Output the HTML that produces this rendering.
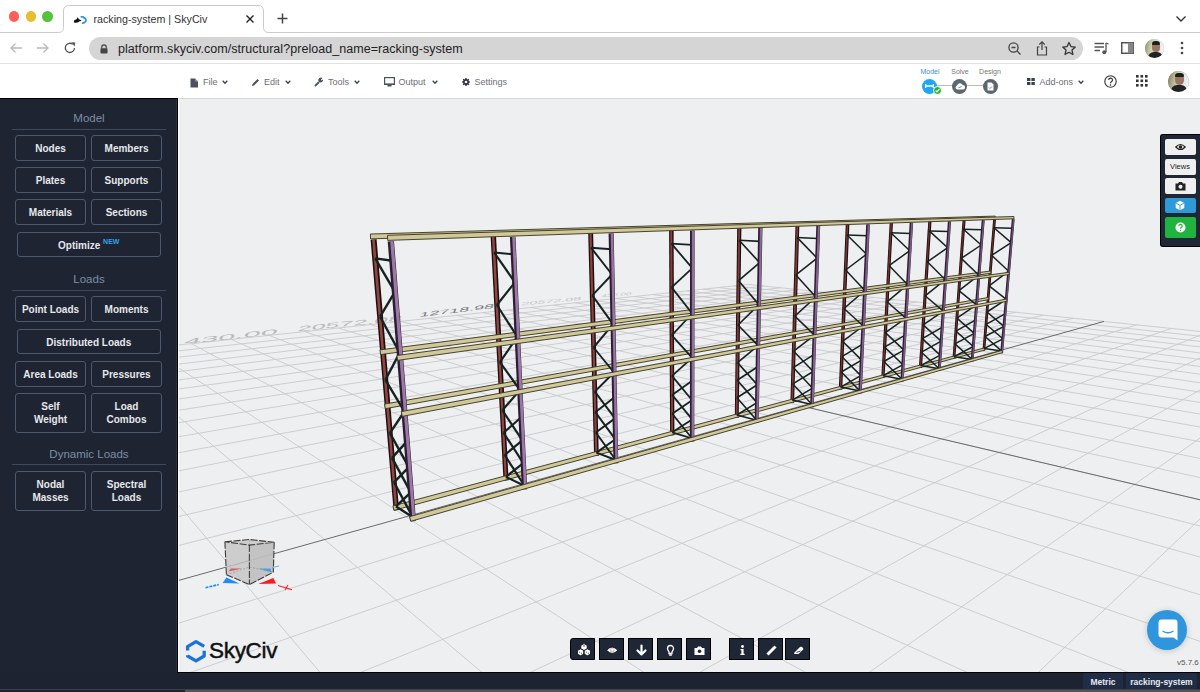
<!DOCTYPE html>
<html><head><meta charset="utf-8">
<style>
*{box-sizing:border-box;margin:0;padding:0}
html,body{width:1200px;height:692px;overflow:hidden;background:#fff;font-family:"Liberation Sans",sans-serif}
.abs{position:absolute}
#tabbar{position:absolute;left:0;top:0;width:1200px;height:33px;background:#fff}
.tl{position:absolute;top:11px;width:10.5px;height:10.5px;border-radius:50%}
#tab{position:absolute;left:63.5px;top:5px;width:200px;height:29px;background:#fff;border:1px solid #cfcfcf;border-bottom:none;border-radius:8px 8px 0 0}
#tabline1{position:absolute;left:0;top:32px;width:64px;height:1px;background:#cfcfcf}
#tabline2{position:absolute;left:263px;top:32px;width:937px;height:1px;background:#cfcfcf}
#addr{position:absolute;left:0;top:33px;width:1200px;height:31px;background:#fff;border-bottom:1px solid #e2e2e2}
#pill{position:absolute;left:89px;top:4px;width:994px;height:23px;border-radius:11.5px;background:#d5d5d5}
#url{position:absolute;left:118px;top:8.5px;font-size:12.5px;color:#222;letter-spacing:0.05px;white-space:nowrap}
#hdr{position:absolute;left:0;top:64px;width:1200px;height:34px;background:#fff}
.menu{position:absolute;top:12.5px;font-size:9px;color:#6b6f76;white-space:nowrap}
#side{position:absolute;left:0;top:98px;width:178px;height:574px;background:#1e2432;border-top:1px solid #000;border-right:1px solid #000;box-shadow:inset -1px 0 #2b3242}
.sh{position:absolute;left:0;width:178px;text-align:center;font-size:11.5px;color:#7d8da3}
.sl{position:absolute;left:12px;width:154px;height:1.5px;background:#3e4a5c}
.btn{position:absolute;height:25.5px;border:1px solid #4c586c;border-radius:3px;color:#e6e8ec;font-weight:bold;font-size:10px;text-align:center;line-height:26px;white-space:nowrap}
.btn2{line-height:13.5px;padding-top:5.5px}
#vp{position:absolute;left:178px;top:98px;width:1022px;height:574px;background:#eeeff1;overflow:hidden;border-top:1px solid #d6d8db;border-left:1px solid #fff}
#vp svg{position:absolute;left:0;top:0}
.g{stroke:#c9cacc;stroke-width:0.9}
.ax{stroke:#6a6a6a;stroke-width:1}
#status{position:absolute;left:0;top:672px;width:1200px;height:20px;background:#1d2331}
.tbb{position:absolute;top:538.8px;width:25px;height:22.5px;background:#1f2736;border:1px solid #000;line-height:0}
#rpanel{position:absolute;left:1159px;top:133px;width:41px;height:113px;background:#1f2736;border:1px solid #000;border-right:none;border-radius:3px 0 0 3px}
.rb{position:absolute;left:3.5px;width:31px;border-radius:2px;background:#efefef}
</style></head><body>
<div id="tabbar">
  <div class="tl" style="left:8.75px;background:#fe5f57"></div>
  <div class="tl" style="left:25.5px;background:#e5bf2e"></div>
  <div class="tl" style="left:42.25px;background:#57c23b"></div>
  <svg class="abs" style="left:0;top:0" width="1200" height="34">
    <path d="M0 32.5H58.5Q63.5 32.5 63.5 27.5V11Q63.5 5.5 69 5.5H258Q263.5 5.5 263.5 11V27.5Q263.5 32.5 268.5 32.5H1200" fill="none" stroke="#cbcbcb" stroke-width="1"/>
  </svg>
  <svg class="abs" style="left:72px;top:15px" width="17" height="10" viewBox="72 15 17 10">
    <path d="M74 22.6Q73.2 19.8 76.3 19.4L77.7 17.3L78.9 19.3Q80.6 19.6 81.6 21.1L79.6 21.2Q77.3 23.2 74 22.6Z" fill="#111"/>
    <path d="M81.3 16.9Q83.4 16.4 83.6 17.6Q86.8 18.8 85.8 21.2Q85 23 82.6 23.2" fill="none" stroke="#2b8fe8" stroke-width="1.7" stroke-linecap="round"/>
  </svg>
  <div class="abs" style="left:93.5px;top:13px;font-size:10.7px;color:#333;white-space:nowrap">racking-system | SkyCiv</div>
  <svg class="abs" style="left:245px;top:14px" width="10" height="10"><path d="M1.5 1.5L8.5 8.5M8.5 1.5L1.5 8.5" stroke="#222" stroke-width="1.4"/></svg>
  <svg class="abs" style="left:277px;top:13px" width="11" height="11"><path d="M5.5 0.5V10.5M0.5 5.5H10.5" stroke="#444" stroke-width="1.5"/></svg>
  <svg class="abs" style="left:1175px;top:15px" width="12" height="8"><path d="M1.5 1.5L6 6L10.5 1.5" stroke="#333" stroke-width="1.4" fill="none"/></svg>
</div>
<div id="addr">
  <svg class="abs" style="left:9px;top:9px" width="14" height="12"><path d="M13 6H2M6.5 1.5L2 6L6.5 10.5" stroke="#bbb" stroke-width="1.3" fill="none"/></svg>
  <svg class="abs" style="left:36px;top:9px" width="14" height="12"><path d="M1 6H12M7.5 1.5L12 6L7.5 10.5" stroke="#bbb" stroke-width="1.3" fill="none"/></svg>
  <svg class="abs" style="left:63px;top:8px" width="14" height="14"><path d="M11.5 7A4.6 4.6 0 1 1 9.8 3.3" stroke="#555" stroke-width="1.3" fill="none"/><path d="M8.3 1.2L12.3 1.6L11.6 5.4Z" fill="#555"/></svg>
  <div id="pill">
    <svg class="abs" style="left:11px;top:7px" width="8" height="10"><path d="M1.8 4.5V3A2.2 2.2 0 0 1 6.2 3V4.5" stroke="#444" stroke-width="1.2" fill="none"/><rect x="0.5" y="4.3" width="7" height="5.2" rx="0.8" fill="#444"/></svg>
    <svg class="abs" style="left:918px;top:4px" width="16" height="16"><circle cx="6.5" cy="6.5" r="4.6" stroke="#444" stroke-width="1.3" fill="none"/><path d="M4.5 6.5H8.5M10 10L13.5 13.5" stroke="#444" stroke-width="1.3"/></svg>
    <svg class="abs" style="left:946px;top:3px" width="14" height="17"><path d="M4.5 7H2.5V15H11.5V7H9.5" stroke="#444" stroke-width="1.2" fill="none"/><path d="M7 10V2M4.3 4.5L7 1.8L9.7 4.5" stroke="#444" stroke-width="1.2" fill="none"/></svg>
    <svg class="abs" style="left:972px;top:4px" width="16" height="15"><path d="M8 1.5L9.9 5.6L14.3 6.1L11 9.1L11.9 13.5L8 11.3L4.1 13.5L5 9.1L1.7 6.1L6.1 5.6Z" stroke="#333" stroke-width="1.3" fill="none" stroke-linejoin="round"/></svg>
  </div>
  <div id="url">platform.skyciv.com/structural?preload_name=racking-system</div>
  <svg class="abs" style="left:1094px;top:9px" width="15" height="13"><path d="M0.5 1.5H10M0.5 5H10M0.5 8.5H6" stroke="#555" stroke-width="1.3"/><path d="M12 1V10" stroke="#555" stroke-width="1.3"/><circle cx="10.3" cy="10.2" r="2" fill="#555"/><path d="M12 1L14.5 2" stroke="#555" stroke-width="1.3"/></svg>
  <svg class="abs" style="left:1121px;top:9px" width="13" height="12"><rect x="0.75" y="0.75" width="11.5" height="10.5" stroke="#555" stroke-width="1.5" fill="none"/><rect x="7" y="0.75" width="5.25" height="10.5" fill="#888"/></svg>
  <div class="abs" style="left:1145px;top:6px;width:19px;height:19px;border-radius:50%;overflow:hidden;background:#aab49a">
  <div class="abs" style="left:0;top:0;width:19px;height:19px;background:linear-gradient(100deg,#8a8a60 0,#c8c8a8 30%,#e6eaec 65%,#f4f6f8 100%)"></div>
  <div class="abs" style="left:6.5px;top:3px;width:8px;height:10px;border-radius:45%;background:#9a7660"></div>
  <div class="abs" style="left:6.5px;top:2px;width:8px;height:3.5px;border-radius:4px 4px 1px 1px;background:#1e1e1e"></div>
  <div class="abs" style="left:3px;top:13px;width:15px;height:9px;border-radius:6px 6px 0 0;background:#222"></div>
</div>
  <svg class="abs" style="left:1180px;top:8px" width="4" height="14"><circle cx="2" cy="2" r="1.3" fill="#444"/><circle cx="2" cy="7" r="1.3" fill="#444"/><circle cx="2" cy="12" r="1.3" fill="#444"/></svg>
</div>
<div id="hdr">
<svg class="abs" style="left:190px;top:14px" width="9" height="10"><path d="M0.5 0.5H5L8 3.5V9.5H0.5Z" fill="#4a5260"/><path d="M5 0.5V3.5H8" fill="#8a929e"/></svg>
<div class="menu" style="left:203px">File</div>
<svg class="abs" style="left:222px;top:16px" width="6" height="5"><path d="M0.7 0.8L3 3.2L5.3 0.8" stroke="#3a4250" stroke-width="1.3" fill="none"/></svg>
<svg class="abs" style="left:251px;top:14px" width="9" height="9"><path d="M1 8L1.5 6L6.5 1L8 2.5L3 7.5Z" fill="#4a5260"/></svg>
<div class="menu" style="left:264px">Edit</div>
<svg class="abs" style="left:285px;top:16px" width="6" height="5"><path d="M0.7 0.8L3 3.2L5.3 0.8" stroke="#3a4250" stroke-width="1.3" fill="none"/></svg>
<svg class="abs" style="left:314px;top:13px" width="9" height="10"><path d="M1 9L5 5" stroke="#4a5260" stroke-width="1.8"/><path d="M4.5 4A2.6 2.6 0 0 1 8.5 1L7 2.8L7.6 3.6L9 2.4A2.6 2.6 0 0 1 5.8 5.5Z" fill="#4a5260"/></svg>
<div class="menu" style="left:328px">Tools</div>
<svg class="abs" style="left:354px;top:16px" width="6" height="5"><path d="M0.7 0.8L3 3.2L5.3 0.8" stroke="#3a4250" stroke-width="1.3" fill="none"/></svg>
<svg class="abs" style="left:384px;top:13px" width="11" height="10"><rect x="0.6" y="0.6" width="9.8" height="6.8" stroke="#4a5260" stroke-width="1.2" fill="none"/><rect x="0" y="6.5" width="11" height="1.5" fill="#4a5260"/><rect x="3.5" y="8" width="4" height="1.5" fill="#4a5260"/></svg>
<div class="menu" style="left:398.5px">Output</div>
<svg class="abs" style="left:432px;top:16px" width="6" height="5"><path d="M0.7 0.8L3 3.2L5.3 0.8" stroke="#3a4250" stroke-width="1.3" fill="none"/></svg>
<svg class="abs" style="left:462px;top:14px" width="8" height="8" viewBox="0 0 16 16"><path d="M6.8 0h2.4l.4 2.2 1.4.6 1.8-1.3 1.7 1.7-1.3 1.8.6 1.4 2.2.4v2.4l-2.2.4-.6 1.4 1.3 1.8-1.7 1.7-1.8-1.3-1.4.6-.4 2.2H6.8l-.4-2.2-1.4-.6-1.8 1.3-1.7-1.7 1.3-1.8-.6-1.4L0 9.2V6.8l2.2-.4.6-1.4-1.3-1.8 1.7-1.7 1.8 1.3 1.4-.6z" fill="#2a3240"/><circle cx="8" cy="8" r="2.6" fill="#fff"/></svg>
<div class="menu" style="left:474.5px">Settings</div>

<div class="abs" style="left:915px;top:4px;width:30px;text-align:center;font-size:7px;color:#3a8fd9">Model</div>
<div class="abs" style="left:945px;top:4px;width:30px;text-align:center;font-size:7px;color:#777">Solve</div>
<div class="abs" style="left:975px;top:4px;width:30px;text-align:center;font-size:7px;color:#777">Design</div>
<div class="abs" style="left:936px;top:21px;width:48px;height:1px;background:#b8bcc2"></div>
<div class="abs" style="left:922px;top:14.5px;width:15px;height:15px;border-radius:50%;background:#1ea5f4"></div>
<svg class="abs" style="left:925px;top:19px" width="9" height="6"><path d="M0.5 1V5M8.5 1V5M0.5 3H8.5" stroke="#fff" stroke-width="1.6"/></svg>
<div class="abs" style="left:933.5px;top:86px"></div>
<div class="abs" style="left:932.5px;top:21.5px;width:9px;height:9px;border-radius:50%;background:#22b33a;border:1px solid #fff"></div>
<svg class="abs" style="left:934.5px;top:23.5px" width="5" height="5"><path d="M0.6 2.5L2 3.9L4.5 1" stroke="#fff" stroke-width="1.2" fill="none"/></svg>
<div class="abs" style="left:952px;top:14.5px;width:15px;height:15px;border-radius:50%;background:#5b6673"></div>
<svg class="abs" style="left:955px;top:18px" width="10" height="8"><path d="M2.3 7.5A2 2 0 0 1 2 3.6A3 3 0 0 1 7.6 3A2.2 2.2 0 0 1 8 7.5Z" fill="#fff"/><path d="M3.5 5L4.5 6L6.5 4" stroke="#5b6673" stroke-width="0.8" fill="none"/></svg>
<div class="abs" style="left:982.5px;top:14.5px;width:15px;height:15px;border-radius:50%;background:#5b6673"></div>
<svg class="abs" style="left:986.5px;top:17.5px" width="7" height="9"><path d="M0.5 0.5H4.5L6.5 2.5V8.5H0.5Z" fill="#fff"/><path d="M2 5.5L3 6.5L5 4.5" stroke="#5b6673" stroke-width="0.8" fill="none"/></svg>

<svg class="abs" style="left:1027px;top:14px" width="8" height="7"><rect x="0" y="0" width="3.4" height="3" fill="#3a4250"/><rect x="4.4" y="0" width="3.4" height="3" fill="#3a4250"/><rect x="0" y="4" width="3.4" height="3" fill="#3a4250"/><rect x="4.4" y="4" width="3.4" height="3" fill="#3a4250"/></svg>
<div class="menu" style="left:1039.5px">Add-ons</div>
<svg class="abs" style="left:1078px;top:16px" width="6" height="5"><path d="M0.7 0.8L3 3.2L5.3 0.8" stroke="#3a4250" stroke-width="1.3" fill="none"/></svg>
<svg class="abs" style="left:1104px;top:11px" width="13" height="13"><circle cx="6.5" cy="6.5" r="5.7" stroke="#333" stroke-width="1.1" fill="none"/><path d="M4.7 5A1.9 1.9 0 1 1 7.4 6.7Q6.5 7.2 6.5 8.2" stroke="#333" stroke-width="1.2" fill="none"/><circle cx="6.5" cy="10" r="0.8" fill="#333"/></svg>
<svg class="abs" style="left:1136px;top:11px" width="12" height="12"><g fill="#333"><rect x="0" y="0" width="2.6" height="2.6"/><rect x="4.5" y="0" width="2.6" height="2.6"/><rect x="9" y="0" width="2.6" height="2.6"/><rect x="0" y="4.5" width="2.6" height="2.6"/><rect x="4.5" y="4.5" width="2.6" height="2.6"/><rect x="9" y="4.5" width="2.6" height="2.6"/><rect x="0" y="9" width="2.6" height="2.6"/><rect x="4.5" y="9" width="2.6" height="2.6"/><rect x="9" y="9" width="2.6" height="2.6"/></g></svg>
<div class="abs" style="left:1168px;top:7px;width:21px;height:21px;border-radius:50%;overflow:hidden;background:#7a8a6a">
  <div class="abs" style="left:0;top:0;width:21px;height:21px;background:linear-gradient(100deg,#7a7a58 0,#b8b898 30%,#e0e4e6 65%,#f2f4f6 100%)"></div>
  <div class="abs" style="left:7px;top:3px;width:9px;height:11px;border-radius:45%;background:#9a7660"></div>
  <div class="abs" style="left:7px;top:2px;width:9px;height:4px;border-radius:4px 4px 1px 1px;background:#1e1e1e"></div>
  <div class="abs" style="left:3px;top:14px;width:16px;height:10px;border-radius:6px 6px 0 0;background:#222"></div>
</div>

</div>
<div id="side">
<div class="sh" style="top:13px">Model</div>
<div class="sl" style="top:29.5px"></div>
<div class="btn" style="left:15px;top:36px;width:71px">Nodes</div>
<div class="btn" style="left:91px;top:36px;width:71px">Members</div>
<div class="btn" style="left:15px;top:68px;width:71px">Plates</div>
<div class="btn" style="left:91px;top:68px;width:71px">Supports</div>
<div class="btn" style="left:15px;top:100px;width:71px">Materials</div>
<div class="btn" style="left:91px;top:100px;width:71px">Sections</div>
<div class="btn" style="left:16.5px;top:132.5px;width:144.5px">Optimize <sup style="font-size:7px;color:#2fa4e7;vertical-align:5px;line-height:0">NEW</sup></div>
<div class="sh" style="top:174px">Loads</div>
<div class="sl" style="top:190.5px"></div>
<div class="btn" style="left:15px;top:197px;width:71px">Point Loads</div>
<div class="btn" style="left:91px;top:197px;width:71px">Moments</div>
<div class="btn" style="left:16.5px;top:229.5px;width:144.5px">Distributed Loads</div>
<div class="btn" style="left:15px;top:262px;width:71px">Area Loads</div>
<div class="btn" style="left:91px;top:262px;width:71px">Pressures</div>
<div class="btn btn2" style="left:15px;top:294px;width:71px;height:39.5px">Self<br>Weight</div>
<div class="btn btn2" style="left:91px;top:294px;width:71px;height:39.5px">Load<br>Combos</div>
<div class="sh" style="top:349px">Dynamic Loads</div>
<div class="sl" style="top:364.5px"></div>
<div class="btn btn2" style="left:15px;top:372px;width:71px;height:39.5px">Nodal<br>Masses</div>
<div class="btn btn2" style="left:91px;top:372px;width:71px;height:39.5px">Spectral<br>Loads</div>

</div>
<div id="vp">
<svg width="1022" height="574" viewBox="0 0 1022 574">
<line class="g" x1="-7676.2" y1="6209.3" x2="-502.4" y2="299.4"/>
<line class="g" x1="-5577.2" y1="6212.6" x2="-426.6" y2="291.3"/>
<line class="g" x1="-3478.2" y1="6215.9" x2="-356.6" y2="283.9"/>
<line class="g" x1="-1379.1" y1="6219.2" x2="-292.0" y2="277.0"/>
<line class="g" x1="719.9" y1="6222.5" x2="-232.1" y2="270.6"/>
<line class="g" x1="2818.9" y1="6225.7" x2="-176.4" y2="264.7"/>
<line class="g" x1="4917.9" y1="6229.0" x2="-124.4" y2="259.2"/>
<line class="g" x1="7016.9" y1="6232.3" x2="-75.9" y2="254.0"/>
<line class="g" x1="9115.9" y1="6235.6" x2="-30.4" y2="249.2"/>
<line class="g" x1="11214.9" y1="6238.9" x2="12.2" y2="244.6"/>
<line class="g" x1="13313.9" y1="6242.2" x2="52.4" y2="240.4"/>
<line class="g" x1="10183.6" y1="4194.7" x2="90.2" y2="236.4"/>
<line class="g" x1="6087.6" y1="2295.5" x2="125.8" y2="232.6"/>
<line class="g" x1="4588.0" y1="1600.2" x2="159.5" y2="229.0"/>
<line class="g" x1="3810.2" y1="1239.6" x2="191.4" y2="225.6"/>
<line class="g" x1="3334.1" y1="1018.9" x2="221.7" y2="222.4"/>
<line class="g" x1="3012.8" y1="869.9" x2="250.4" y2="219.3"/>
<line class="g" x1="2781.2" y1="762.5" x2="277.7" y2="216.4"/>
<line class="g" x1="2606.5" y1="681.5" x2="303.7" y2="213.7"/>
<line class="g" x1="2469.9" y1="618.2" x2="328.4" y2="211.0"/>
<line class="g" x1="2360.2" y1="567.3" x2="352.1" y2="208.5"/>
<line class="g" x1="2270.2" y1="525.6" x2="374.6" y2="206.1"/>
<line class="g" x1="2195.0" y1="490.7" x2="396.2" y2="203.8"/>
<line class="g" x1="2131.3" y1="461.2" x2="416.8" y2="201.6"/>
<line class="g" x1="2076.5" y1="435.8" x2="436.6" y2="199.5"/>
<line class="g" x1="2029.0" y1="413.7" x2="455.6" y2="197.5"/>
<line class="g" x1="1987.3" y1="394.4" x2="473.8" y2="195.6"/>
<line class="g" x1="1950.5" y1="377.4" x2="491.2" y2="193.7"/>
<line class="g" x1="1917.8" y1="362.2" x2="508.0" y2="191.9"/>
<line class="g" x1="1888.5" y1="348.6" x2="524.2" y2="190.2"/>
<line class="g" x1="1862.0" y1="336.3" x2="539.7" y2="188.6"/>
<line class="g" x1="1838.1" y1="325.2" x2="554.7" y2="187.0"/>
<line class="g" x1="1816.4" y1="315.2" x2="569.2" y2="185.4"/>
<line class="g" x1="14603.9" y1="6244.2" x2="1816.4" y2="315.2"/>
<line class="g" x1="12416.7" y1="6240.8" x2="1723.1" y2="305.5"/>
<line class="g" x1="10229.4" y1="6237.3" x2="1637.9" y2="296.6"/>
<line class="g" x1="8042.1" y1="6233.9" x2="1559.7" y2="288.5"/>
<line class="g" x1="5854.8" y1="6230.5" x2="1487.7" y2="281.0"/>
<line class="g" x1="3667.5" y1="6227.1" x2="1421.1" y2="274.0"/>
<line class="g" x1="1480.2" y1="6223.7" x2="1359.5" y2="267.6"/>
<line class="g" x1="-707.0" y1="6220.2" x2="1302.2" y2="261.7"/>
<line class="g" x1="-2894.3" y1="6216.8" x2="1248.8" y2="256.1"/>
<line class="g" x1="-5081.6" y1="6213.4" x2="1199.0" y2="250.9"/>
<line class="g" x1="-7268.9" y1="6210.0" x2="1152.3" y2="246.1"/>
<line class="g" x1="-3788.3" y1="3006.4" x2="1108.6" y2="241.5"/>
<line class="g" x1="-2405.8" y1="1867.4" x2="1067.4" y2="237.3"/>
<line class="g" x1="-1801.6" y1="1369.7" x2="1028.7" y2="233.2"/>
<line class="g" x1="-1462.9" y1="1090.6" x2="992.2" y2="229.4"/>
<line class="g" x1="-1246.1" y1="912.1" x2="957.7" y2="225.8"/>
<line class="g" x1="-984.9" y1="696.8" x2="894.0" y2="219.2"/>
<line class="g" x1="-900.0" y1="626.9" x2="864.6" y2="216.2"/>
<line class="g" x1="-833.0" y1="571.7" x2="836.7" y2="213.3"/>
<line class="g" x1="-778.6" y1="526.9" x2="810.2" y2="210.5"/>
<line class="g" x1="-733.7" y1="489.9" x2="784.8" y2="207.9"/>
<line class="g" x1="-695.9" y1="458.8" x2="760.7" y2="205.4"/>
<line class="g" x1="-663.7" y1="432.3" x2="737.7" y2="203.0"/>
<line class="g" x1="-635.9" y1="409.4" x2="715.6" y2="200.7"/>
<line class="g" x1="-611.7" y1="389.4" x2="694.5" y2="198.5"/>
<line class="g" x1="-590.5" y1="371.9" x2="674.4" y2="196.4"/>
<line class="g" x1="-571.6" y1="356.4" x2="655.0" y2="194.4"/>
<line class="g" x1="-554.8" y1="342.5" x2="636.4" y2="192.4"/>
<line class="g" x1="-539.7" y1="330.1" x2="618.6" y2="190.6"/>
<line class="g" x1="-526.0" y1="318.8" x2="601.5" y2="188.8"/>
<line class="g" x1="-513.7" y1="308.6" x2="585.0" y2="187.1"/>
<line class="g" x1="-502.4" y1="299.4" x2="569.2" y2="185.4"/>
<line class="ax" x1="3012.8" y1="869.9" x2="622.8" y2="307.0"/>
<line class="ax" x1="-1095.6" y1="788.0" x2="925.0" y2="222.4"/>
<text transform="translate(4.4,245.5) rotate(-6.40) skewX(-25) scale(1,0.236)" font-family="Liberation Sans" font-size="30.8" fill="#b9babc">430.00</text>
<text transform="translate(118.0,232.5) rotate(-6.00) skewX(-25) scale(1,0.277)" font-family="Liberation Sans" font-size="25.2" fill="#b9babc">20572.08</text>
<text transform="translate(240.0,218.0) rotate(-6.90) skewX(-25) scale(1,0.326)" font-family="Liberation Sans" font-size="18.0" fill="#7a7a7a">12718.98</text>
<text transform="translate(342.0,206.5) rotate(-5.24) skewX(-25) scale(1,0.309)" font-family="Liberation Sans" font-size="14.4" fill="#c4c5c7">20572.08</text>
<text transform="translate(422.0,198.5) rotate(-4.76) skewX(-25) scale(1,0.426)" font-family="Liberation Sans" font-size="9.8" fill="#c4c5c7">430.00</text>
<polygon points="806.2,251.6 817.0,119.9 814.2,119.7 803.5,251.4" fill="#220c0c"/><polygon points="805.4,251.6 816.2,119.9 814.9,119.7 804.2,251.5" fill="#5b2d2c"/>
<polygon points="776.3,259.8 786.6,120.9 783.6,120.7 773.5,259.6" fill="#220c0c"/><polygon points="775.5,259.7 785.7,120.9 784.3,120.8 774.2,259.6" fill="#60302f"/>
<polygon points="743.0,268.9 752.5,122.1 749.3,121.9 739.9,268.7" fill="#220c0c"/><polygon points="742.1,268.8 751.5,122.0 750.1,121.9 740.7,268.7" fill="#663332"/>
<polygon points="705.5,279.0 714.0,123.3 710.7,123.2 702.3,278.9" fill="#220c0c"/><polygon points="704.6,279.0 713.0,123.3 711.5,123.2 703.1,278.9" fill="#6b3635"/>
<polygon points="663.2,290.6 670.4,124.8 666.8,124.6 659.8,290.4" fill="#220c0c"/><polygon points="662.2,290.5 669.3,124.7 667.7,124.7 660.7,290.4" fill="#703938"/>
<polygon points="615.1,303.7 620.3,126.4 616.5,126.3 611.4,303.5" fill="#220c0c"/><polygon points="614.0,303.6 619.2,126.4 617.4,126.4 612.3,303.6" fill="#753c3a"/>
<polygon points="559.7,318.7 562.4,128.4 558.2,128.3 555.8,318.7" fill="#220c0c"/><polygon points="558.5,318.7 561.1,128.3 559.3,128.3 556.7,318.7" fill="#7a3f3d"/>
<polygon points="495.4,336.2 494.6,130.6 490.1,130.6 491.1,336.2" fill="#220c0c"/><polygon points="494.1,336.2 493.2,130.6 491.2,130.6 492.2,336.2" fill="#804240"/>
<polygon points="419.8,356.7 414.1,133.2 409.2,133.4 415.1,356.9" fill="#220c0c"/><polygon points="418.4,356.8 412.6,133.3 410.4,133.3 416.3,356.8" fill="#854543"/>
<polygon points="329.6,381.2 317.0,136.4 311.6,136.7 324.5,381.5" fill="#220c0c"/><polygon points="328.0,381.3 315.4,136.5 312.9,136.6 325.8,381.4" fill="#8a4846"/>
<polygon points="220.1,410.9 197.6,140.3 191.6,140.8 214.6,411.4" fill="#220c0c"/><polygon points="218.5,411.1 195.8,140.4 193.1,140.7 216.0,411.3" fill="#8a4846"/>
<polygon points="215.1,411.3 805.9,251.0 805.3,248.9 213.9,406.9" fill="#d0c898" stroke="#3e3b28" stroke-width="0.95"/>
<polygon points="206.3,309.7 809.9,200.6 809.5,198.4 205.5,305.1" fill="#d0c898" stroke="#3e3b28" stroke-width="0.95"/>
<polygon points="201.6,255.6 812.0,174.3 811.7,172.0 201.0,250.9" fill="#d0c898" stroke="#3e3b28" stroke-width="0.95"/>
<polygon points="191.5,139.9 816.4,119.4 816.3,117.1 191.4,135.0" fill="#d0c898" stroke="#3e3b28" stroke-width="0.95"/>
<line x1="805.0" y1="249.6" x2="822.8" y2="252.1" stroke="#152222" stroke-width="1.50"/>
<line x1="806.0" y1="237.5" x2="822.8" y2="252.1" stroke="#152222" stroke-width="1.50"/>
<line x1="823.9" y1="239.8" x2="805.0" y2="249.6" stroke="#152222" stroke-width="1.50"/>
<line x1="807.0" y1="225.3" x2="823.9" y2="239.8" stroke="#152222" stroke-width="1.50"/>
<line x1="824.9" y1="227.4" x2="806.0" y2="237.5" stroke="#152222" stroke-width="1.50"/>
<line x1="808.0" y1="213.0" x2="824.9" y2="227.4" stroke="#152222" stroke-width="1.50"/>
<line x1="826.0" y1="214.9" x2="807.0" y2="225.3" stroke="#152222" stroke-width="1.50"/>
<line x1="827.3" y1="200.3" x2="808.0" y2="213.0" stroke="#152222" stroke-width="1.50"/>
<line x1="810.1" y1="186.8" x2="827.3" y2="200.3" stroke="#152222" stroke-width="1.50"/>
<line x1="829.7" y1="172.2" x2="810.1" y2="186.8" stroke="#152222" stroke-width="1.50"/>
<line x1="812.6" y1="156.3" x2="829.7" y2="172.2" stroke="#152222" stroke-width="1.50"/>
<line x1="832.2" y1="143.6" x2="812.6" y2="156.3" stroke="#152222" stroke-width="1.50"/>
<line x1="814.9" y1="128.7" x2="832.2" y2="143.6" stroke="#152222" stroke-width="1.50"/>
<line x1="814.9" y1="128.7" x2="833.4" y2="129.2" stroke="#152222" stroke-width="1.50"/>
<line x1="775.0" y1="257.7" x2="793.3" y2="260.5" stroke="#152222" stroke-width="1.50"/>
<line x1="776.0" y1="244.9" x2="793.3" y2="260.5" stroke="#152222" stroke-width="1.50"/>
<line x1="794.3" y1="247.5" x2="775.0" y2="257.7" stroke="#152222" stroke-width="1.50"/>
<line x1="776.9" y1="232.1" x2="794.3" y2="247.5" stroke="#152222" stroke-width="1.50"/>
<line x1="795.3" y1="234.4" x2="776.0" y2="244.9" stroke="#152222" stroke-width="1.50"/>
<line x1="777.9" y1="219.1" x2="795.3" y2="234.4" stroke="#152222" stroke-width="1.50"/>
<line x1="796.3" y1="221.2" x2="776.9" y2="232.1" stroke="#152222" stroke-width="1.50"/>
<line x1="797.5" y1="205.9" x2="777.9" y2="219.1" stroke="#152222" stroke-width="1.50"/>
<line x1="779.9" y1="191.6" x2="797.5" y2="205.9" stroke="#152222" stroke-width="1.50"/>
<line x1="799.9" y1="176.2" x2="779.9" y2="191.6" stroke="#152222" stroke-width="1.50"/>
<line x1="782.2" y1="159.4" x2="799.9" y2="176.2" stroke="#152222" stroke-width="1.50"/>
<line x1="802.2" y1="146.0" x2="782.2" y2="159.4" stroke="#152222" stroke-width="1.50"/>
<line x1="784.4" y1="130.2" x2="802.2" y2="146.0" stroke="#152222" stroke-width="1.50"/>
<line x1="784.4" y1="130.2" x2="803.4" y2="130.7" stroke="#152222" stroke-width="1.50"/>
<line x1="741.6" y1="266.6" x2="760.2" y2="269.8" stroke="#152222" stroke-width="1.50"/>
<line x1="742.5" y1="253.2" x2="760.2" y2="269.8" stroke="#152222" stroke-width="1.50"/>
<line x1="761.2" y1="256.1" x2="741.6" y2="266.6" stroke="#152222" stroke-width="1.50"/>
<line x1="743.3" y1="239.6" x2="761.2" y2="256.1" stroke="#152222" stroke-width="1.50"/>
<line x1="762.2" y1="242.2" x2="742.5" y2="253.2" stroke="#152222" stroke-width="1.50"/>
<line x1="744.2" y1="225.9" x2="762.2" y2="242.2" stroke="#152222" stroke-width="1.50"/>
<line x1="763.1" y1="228.3" x2="743.3" y2="239.6" stroke="#152222" stroke-width="1.50"/>
<line x1="764.3" y1="212.1" x2="744.2" y2="225.9" stroke="#152222" stroke-width="1.50"/>
<line x1="746.1" y1="196.8" x2="764.3" y2="212.1" stroke="#152222" stroke-width="1.50"/>
<line x1="766.4" y1="180.7" x2="746.1" y2="196.8" stroke="#152222" stroke-width="1.50"/>
<line x1="748.3" y1="162.8" x2="766.4" y2="180.7" stroke="#152222" stroke-width="1.50"/>
<line x1="768.7" y1="148.7" x2="748.3" y2="162.8" stroke="#152222" stroke-width="1.50"/>
<line x1="750.2" y1="131.9" x2="768.7" y2="148.7" stroke="#152222" stroke-width="1.50"/>
<line x1="750.2" y1="131.9" x2="769.8" y2="132.5" stroke="#152222" stroke-width="1.50"/>
<line x1="704.1" y1="276.7" x2="723.1" y2="280.2" stroke="#152222" stroke-width="1.50"/>
<line x1="724.0" y1="265.7" x2="704.1" y2="276.7" stroke="#152222" stroke-width="1.50"/>
<line x1="704.8" y1="262.5" x2="723.1" y2="280.2" stroke="#152222" stroke-width="1.50"/>
<line x1="705.6" y1="248.1" x2="724.0" y2="265.7" stroke="#152222" stroke-width="1.50"/>
<line x1="724.9" y1="251.1" x2="704.8" y2="262.5" stroke="#152222" stroke-width="1.50"/>
<line x1="706.4" y1="233.6" x2="724.9" y2="251.1" stroke="#152222" stroke-width="1.50"/>
<line x1="725.7" y1="236.3" x2="705.6" y2="248.1" stroke="#152222" stroke-width="1.50"/>
<line x1="726.8" y1="219.1" x2="706.4" y2="233.6" stroke="#152222" stroke-width="1.50"/>
<line x1="708.0" y1="202.8" x2="726.8" y2="219.1" stroke="#152222" stroke-width="1.50"/>
<line x1="728.7" y1="185.7" x2="708.0" y2="202.8" stroke="#152222" stroke-width="1.50"/>
<line x1="710.0" y1="166.6" x2="728.7" y2="185.7" stroke="#152222" stroke-width="1.50"/>
<line x1="730.8" y1="151.7" x2="710.0" y2="166.6" stroke="#152222" stroke-width="1.50"/>
<line x1="711.8" y1="133.8" x2="730.8" y2="151.7" stroke="#152222" stroke-width="1.50"/>
<line x1="711.8" y1="133.8" x2="731.8" y2="134.5" stroke="#152222" stroke-width="1.50"/>
<line x1="661.6" y1="288.1" x2="681.1" y2="292.1" stroke="#152222" stroke-width="1.50"/>
<line x1="662.3" y1="273.0" x2="681.1" y2="292.1" stroke="#152222" stroke-width="1.50"/>
<line x1="681.8" y1="276.6" x2="661.6" y2="288.1" stroke="#152222" stroke-width="1.50"/>
<line x1="662.9" y1="257.7" x2="681.8" y2="276.6" stroke="#152222" stroke-width="1.50"/>
<line x1="682.6" y1="261.1" x2="662.3" y2="273.0" stroke="#152222" stroke-width="1.50"/>
<line x1="663.6" y1="242.3" x2="682.6" y2="261.1" stroke="#152222" stroke-width="1.50"/>
<line x1="683.3" y1="245.4" x2="662.9" y2="257.7" stroke="#152222" stroke-width="1.50"/>
<line x1="684.2" y1="227.0" x2="663.6" y2="242.3" stroke="#152222" stroke-width="1.50"/>
<line x1="665.0" y1="209.5" x2="684.2" y2="227.0" stroke="#152222" stroke-width="1.50"/>
<line x1="685.9" y1="191.4" x2="665.0" y2="209.5" stroke="#152222" stroke-width="1.50"/>
<line x1="666.6" y1="171.0" x2="685.9" y2="191.4" stroke="#152222" stroke-width="1.50"/>
<line x1="687.6" y1="155.2" x2="666.6" y2="171.0" stroke="#152222" stroke-width="1.50"/>
<line x1="668.1" y1="136.0" x2="687.6" y2="155.2" stroke="#152222" stroke-width="1.50"/>
<line x1="668.1" y1="136.0" x2="688.5" y2="136.8" stroke="#152222" stroke-width="1.50"/>
<line x1="613.3" y1="301.1" x2="633.1" y2="305.6" stroke="#152222" stroke-width="1.53"/>
<line x1="613.8" y1="284.9" x2="633.1" y2="305.6" stroke="#152222" stroke-width="1.53"/>
<line x1="633.6" y1="289.2" x2="613.3" y2="301.1" stroke="#152222" stroke-width="1.53"/>
<line x1="614.3" y1="268.6" x2="633.6" y2="289.2" stroke="#152222" stroke-width="1.53"/>
<line x1="634.2" y1="272.5" x2="613.8" y2="284.9" stroke="#152222" stroke-width="1.53"/>
<line x1="634.8" y1="255.7" x2="614.3" y2="268.6" stroke="#152222" stroke-width="1.53"/>
<line x1="614.7" y1="252.2" x2="634.2" y2="272.5" stroke="#152222" stroke-width="1.53"/>
<line x1="635.5" y1="236.1" x2="614.7" y2="252.2" stroke="#152222" stroke-width="1.53"/>
<line x1="615.8" y1="217.1" x2="635.5" y2="236.1" stroke="#152222" stroke-width="1.53"/>
<line x1="636.8" y1="198.0" x2="615.8" y2="217.1" stroke="#152222" stroke-width="1.53"/>
<line x1="616.9" y1="175.9" x2="636.8" y2="198.0" stroke="#152222" stroke-width="1.53"/>
<line x1="638.1" y1="159.1" x2="616.9" y2="175.9" stroke="#152222" stroke-width="1.53"/>
<line x1="618.0" y1="138.4" x2="638.1" y2="159.1" stroke="#152222" stroke-width="1.53"/>
<line x1="618.0" y1="138.4" x2="638.8" y2="139.4" stroke="#152222" stroke-width="1.53"/>
<line x1="557.8" y1="316.0" x2="577.7" y2="321.2" stroke="#152222" stroke-width="1.65"/>
<line x1="558.0" y1="298.7" x2="577.7" y2="321.2" stroke="#152222" stroke-width="1.65"/>
<line x1="578.0" y1="303.6" x2="557.8" y2="316.0" stroke="#152222" stroke-width="1.65"/>
<line x1="558.2" y1="281.2" x2="578.0" y2="303.6" stroke="#152222" stroke-width="1.65"/>
<line x1="578.3" y1="285.7" x2="558.0" y2="298.7" stroke="#152222" stroke-width="1.65"/>
<line x1="558.5" y1="263.6" x2="578.3" y2="285.7" stroke="#152222" stroke-width="1.65"/>
<line x1="578.7" y1="267.7" x2="558.2" y2="281.2" stroke="#152222" stroke-width="1.65"/>
<line x1="579.1" y1="246.6" x2="558.5" y2="263.6" stroke="#152222" stroke-width="1.65"/>
<line x1="559.0" y1="226.0" x2="579.1" y2="246.6" stroke="#152222" stroke-width="1.65"/>
<line x1="579.9" y1="205.6" x2="559.0" y2="226.0" stroke="#152222" stroke-width="1.65"/>
<line x1="559.6" y1="181.7" x2="579.9" y2="205.6" stroke="#152222" stroke-width="1.65"/>
<line x1="580.7" y1="163.7" x2="559.6" y2="181.7" stroke="#152222" stroke-width="1.65"/>
<line x1="560.1" y1="141.3" x2="580.7" y2="163.7" stroke="#152222" stroke-width="1.65"/>
<line x1="560.1" y1="141.3" x2="581.1" y2="142.4" stroke="#152222" stroke-width="1.65"/>
<line x1="493.2" y1="333.3" x2="513.1" y2="339.5" stroke="#152222" stroke-width="1.79"/>
<line x1="493.2" y1="314.7" x2="513.1" y2="339.5" stroke="#152222" stroke-width="1.79"/>
<line x1="513.1" y1="320.4" x2="493.2" y2="333.3" stroke="#152222" stroke-width="1.79"/>
<line x1="513.1" y1="301.2" x2="493.2" y2="314.7" stroke="#152222" stroke-width="1.79"/>
<line x1="493.1" y1="295.9" x2="513.1" y2="320.4" stroke="#152222" stroke-width="1.79"/>
<line x1="493.0" y1="276.9" x2="513.1" y2="301.2" stroke="#152222" stroke-width="1.79"/>
<line x1="513.2" y1="281.7" x2="493.1" y2="295.9" stroke="#152222" stroke-width="1.79"/>
<line x1="513.2" y1="258.9" x2="493.0" y2="276.9" stroke="#152222" stroke-width="1.79"/>
<line x1="492.8" y1="236.3" x2="513.2" y2="258.9" stroke="#152222" stroke-width="1.79"/>
<line x1="513.2" y1="214.5" x2="492.8" y2="236.3" stroke="#152222" stroke-width="1.79"/>
<line x1="492.6" y1="188.4" x2="513.2" y2="214.5" stroke="#152222" stroke-width="1.79"/>
<line x1="513.3" y1="169.1" x2="492.6" y2="188.4" stroke="#152222" stroke-width="1.79"/>
<line x1="492.4" y1="144.7" x2="513.3" y2="169.1" stroke="#152222" stroke-width="1.79"/>
<line x1="492.4" y1="144.7" x2="513.3" y2="145.9" stroke="#152222" stroke-width="1.79"/>
<line x1="417.4" y1="353.6" x2="436.8" y2="361.0" stroke="#152222" stroke-width="1.96"/>
<line x1="416.8" y1="333.5" x2="436.8" y2="361.0" stroke="#152222" stroke-width="1.96"/>
<line x1="436.4" y1="340.3" x2="417.4" y2="353.6" stroke="#152222" stroke-width="1.96"/>
<line x1="416.3" y1="313.2" x2="436.4" y2="340.3" stroke="#152222" stroke-width="1.96"/>
<line x1="436.0" y1="319.4" x2="416.8" y2="333.5" stroke="#152222" stroke-width="1.96"/>
<line x1="435.5" y1="298.3" x2="416.3" y2="313.2" stroke="#152222" stroke-width="1.96"/>
<line x1="415.8" y1="292.6" x2="436.0" y2="319.4" stroke="#152222" stroke-width="1.96"/>
<line x1="435.0" y1="273.5" x2="415.8" y2="292.6" stroke="#152222" stroke-width="1.96"/>
<line x1="414.6" y1="248.5" x2="435.0" y2="273.5" stroke="#152222" stroke-width="1.96"/>
<line x1="434.0" y1="225.1" x2="414.6" y2="248.5" stroke="#152222" stroke-width="1.96"/>
<line x1="413.3" y1="196.4" x2="434.0" y2="225.1" stroke="#152222" stroke-width="1.96"/>
<line x1="433.0" y1="175.5" x2="413.3" y2="196.4" stroke="#152222" stroke-width="1.96"/>
<line x1="412.0" y1="148.7" x2="433.0" y2="175.5" stroke="#152222" stroke-width="1.96"/>
<line x1="412.0" y1="148.7" x2="432.5" y2="150.2" stroke="#152222" stroke-width="1.96"/>
<line x1="326.9" y1="377.9" x2="345.4" y2="386.7" stroke="#152222" stroke-width="2.16"/>
<line x1="325.7" y1="356.0" x2="345.4" y2="386.7" stroke="#152222" stroke-width="2.16"/>
<line x1="344.3" y1="364.2" x2="326.9" y2="377.9" stroke="#152222" stroke-width="2.16"/>
<line x1="324.6" y1="333.8" x2="344.3" y2="364.2" stroke="#152222" stroke-width="2.16"/>
<line x1="343.3" y1="341.3" x2="325.7" y2="356.0" stroke="#152222" stroke-width="2.16"/>
<line x1="323.4" y1="311.3" x2="343.3" y2="341.3" stroke="#152222" stroke-width="2.16"/>
<line x1="342.2" y1="318.2" x2="324.6" y2="333.8" stroke="#152222" stroke-width="2.16"/>
<line x1="340.9" y1="291.0" x2="323.4" y2="311.3" stroke="#152222" stroke-width="2.16"/>
<line x1="320.9" y1="263.1" x2="340.9" y2="291.0" stroke="#152222" stroke-width="2.16"/>
<line x1="338.4" y1="237.9" x2="320.9" y2="263.1" stroke="#152222" stroke-width="2.16"/>
<line x1="317.9" y1="206.0" x2="338.4" y2="237.9" stroke="#152222" stroke-width="2.16"/>
<line x1="335.9" y1="183.3" x2="317.9" y2="206.0" stroke="#152222" stroke-width="2.16"/>
<line x1="315.2" y1="153.5" x2="335.9" y2="183.3" stroke="#152222" stroke-width="2.16"/>
<line x1="315.2" y1="153.5" x2="334.6" y2="155.3" stroke="#152222" stroke-width="2.16"/>
<line x1="217.0" y1="407.4" x2="233.8" y2="418.2" stroke="#152222" stroke-width="2.40"/>
<line x1="231.8" y1="393.4" x2="217.0" y2="407.4" stroke="#152222" stroke-width="2.40"/>
<line x1="215.0" y1="383.3" x2="233.8" y2="418.2" stroke="#152222" stroke-width="2.40"/>
<line x1="213.0" y1="358.9" x2="231.8" y2="393.4" stroke="#152222" stroke-width="2.40"/>
<line x1="229.8" y1="368.2" x2="215.0" y2="383.3" stroke="#152222" stroke-width="2.40"/>
<line x1="210.9" y1="334.2" x2="229.8" y2="368.2" stroke="#152222" stroke-width="2.40"/>
<line x1="227.8" y1="342.6" x2="213.0" y2="358.9" stroke="#152222" stroke-width="2.40"/>
<line x1="225.4" y1="312.5" x2="210.9" y2="334.2" stroke="#152222" stroke-width="2.40"/>
<line x1="206.4" y1="280.9" x2="225.4" y2="312.5" stroke="#152222" stroke-width="2.40"/>
<line x1="220.7" y1="253.7" x2="206.4" y2="280.9" stroke="#152222" stroke-width="2.40"/>
<line x1="201.1" y1="217.7" x2="220.7" y2="253.7" stroke="#152222" stroke-width="2.40"/>
<line x1="215.9" y1="192.9" x2="201.1" y2="217.7" stroke="#152222" stroke-width="2.40"/>
<line x1="196.2" y1="159.4" x2="215.9" y2="192.9" stroke="#152222" stroke-width="2.40"/>
<line x1="196.2" y1="159.4" x2="213.4" y2="161.7" stroke="#152222" stroke-width="2.40"/>
<polygon points="824.0,254.2 835.6,120.3 832.8,120.0 821.2,254.0" fill="#2e1c34"/><polygon points="823.8,254.2 835.4,120.3 833.9,120.1 822.4,254.0" fill="#695072"/>
<polygon points="794.5,262.6 805.7,121.3 802.7,121.1 791.6,262.4" fill="#2e1c34"/><polygon points="794.3,262.6 805.4,121.3 803.9,121.2 792.8,262.5" fill="#6f5477"/>
<polygon points="761.6,272.0 772.1,122.5 768.9,122.3 758.6,271.8" fill="#2e1c34"/><polygon points="761.4,272.0 771.8,122.5 770.2,122.4 759.8,271.9" fill="#74597d"/>
<polygon points="724.6,282.6 734.1,123.9 730.7,123.6 721.4,282.4" fill="#2e1c34"/><polygon points="724.4,282.6 733.9,123.8 732.1,123.7 722.7,282.5" fill="#7a5e82"/>
<polygon points="682.7,294.6 690.9,125.4 687.2,125.2 679.2,294.4" fill="#2e1c34"/><polygon points="682.4,294.6 690.6,125.4 688.7,125.3 680.6,294.5" fill="#7f6288"/>
<polygon points="634.8,308.3 641.2,127.1 637.3,127.0 631.1,308.2" fill="#2e1c34"/><polygon points="634.5,308.3 640.9,127.1 638.8,127.0 632.6,308.2" fill="#84678e"/>
<polygon points="579.6,324.1 583.5,129.1 579.2,129.0 575.6,324.0" fill="#2e1c34"/><polygon points="579.3,324.1 583.1,129.1 580.9,129.1 577.2,324.0" fill="#8a6c93"/>
<polygon points="515.3,342.4 515.6,131.5 511.0,131.5 510.9,342.4" fill="#2e1c34"/><polygon points="514.9,342.4 515.3,131.5 512.9,131.5 512.6,342.4" fill="#8f7199"/>
<polygon points="439.3,364.2 434.7,134.3 429.6,134.4 434.5,364.2" fill="#2e1c34"/><polygon points="438.9,364.2 434.3,134.3 431.7,134.3 436.4,364.2" fill="#95759e"/>
<polygon points="348.2,390.2 336.5,137.7 330.9,137.9 342.9,390.4" fill="#2e1c34"/><polygon points="347.8,390.2 336.1,137.7 333.2,137.8 345.0,390.3" fill="#9a7aa4"/>
<polygon points="237.0,421.9 215.0,141.9 208.7,142.4 231.2,422.3" fill="#2e1c34"/><polygon points="236.5,421.9 214.5,141.9 211.2,142.2 233.5,422.2" fill="#9a7aa4"/>
<polygon points="231.8,422.3 823.7,253.6 823.0,251.4 230.5,417.7" fill="#d0c898" stroke="#3e3b28" stroke-width="0.95"/>
<polygon points="223.2,317.4 828.0,202.3 827.6,200.0 222.3,312.6" fill="#d0c898" stroke="#3e3b28" stroke-width="0.95"/>
<polygon points="218.6,261.4 830.3,175.5 829.9,173.3 217.9,256.5" fill="#d0c898" stroke="#3e3b28" stroke-width="0.95"/>
<polygon points="208.7,141.4 835.0,119.8 834.9,117.5 208.5,136.3" fill="#d0c898" stroke="#3e3b28" stroke-width="0.95"/>
</svg>
<!-- logo -->
<svg class="abs" style="left:5px;top:538px" width="24" height="26" viewBox="183 636 24 26">
  <path d="M186.6 649.6V645.6L195 640.6L203.2 645.4" fill="none" stroke="#1a73d8" stroke-width="3.3" stroke-linejoin="round"/>
  <path d="M203.2 649.8V655L195 659.9L186.6 655V654.2" fill="none" stroke="#1a73d8" stroke-width="3.3" stroke-linejoin="round"/>
</svg>
<div class="abs" style="left:30px;top:538.5px;font-size:22.5px;color:#111;letter-spacing:-0.3px;white-space:nowrap;-webkit-text-stroke:0.45px #111">SkyCiv</div>
<!-- bottom toolbar -->
<div class="abs tbb" style="left:391px;border-radius:3px 0 0 3px">
 <svg width="25" height="23" viewBox="0 0 25 23"><g fill="#fff" stroke="#0c0f14" stroke-width="0.9"><path d="M13 4.6L16.2 6.3V9.9L13 11.6L9.8 9.9V6.3Z"/><path d="M9.6 9.8L12.8 11.5V15.1L9.6 16.8L6.4 15.1V11.5Z"/><path d="M16.4 9.8L19.6 11.5V15.1L16.4 16.8L13.2 15.1V11.5Z"/></g><g fill="#555"><circle cx="13" cy="7" r="0.8"/><circle cx="8.6" cy="13.2" r="0.6"/><circle cx="10.6" cy="14.2" r="0.6"/><circle cx="15.4" cy="13.2" r="0.6"/><circle cx="17.4" cy="14.2" r="0.6"/></g></svg>
</div>
<div class="abs tbb" style="left:420.3px">
 <svg width="25" height="23" viewBox="0 0 25 23"><path d="M6.6 11.3Q12.2 5 17.8 11.3Q12.2 17.3 6.6 11.3Z" fill="#fff" stroke="#0c0f14" stroke-width="0.8"/><circle cx="12.2" cy="11" r="2.3" fill="#c8c8c8"/><circle cx="12.4" cy="10.6" r="1.1" fill="#fff"/></svg>
</div>
<div class="abs tbb" style="left:449px">
 <svg width="25" height="23" viewBox="0 0 25 23"><path d="M12.5 6.5V15.5M8.5 11.5L12.5 15.5L16.5 11.5" fill="none" stroke="#fff" stroke-width="2.2" stroke-linecap="round" stroke-linejoin="round"/></svg>
</div>
<div class="abs tbb" style="left:478.3px">
 <svg width="25" height="23" viewBox="0 0 25 23"><path d="M12.5 6.5A3 3 0 0 1 15.5 9.5Q15.5 11 14 12.8V14.5H11V12.8Q9.5 11 9.5 9.5A3 3 0 0 1 12.5 6.5Z" fill="none" stroke="#fff" stroke-width="1.3"/><rect x="11.2" y="15.2" width="2.6" height="1.6" fill="#fff"/></svg>
</div>
<div class="abs tbb" style="left:507px">
 <svg width="25" height="23" viewBox="0 0 25 23"><path d="M7.5 9H10L11 7.5H14L15 9H17.5V16H7.5Z" fill="#fff"/><circle cx="12.5" cy="12.3" r="1.8" fill="#1f2736"/></svg>
</div>
<div class="abs tbb" style="left:549.8px">
 <svg width="25" height="23" viewBox="0 0 25 23"><circle cx="12.5" cy="7.5" r="1.4" fill="#fff"/><path d="M10.5 10H13.6V14.8H14.6V16H10.4V14.8H11.4V11.2H10.5Z" fill="#fff"/></svg>
</div>
<div class="abs tbb" style="left:578.9px">
 <svg width="25" height="23" viewBox="0 0 25 23"><path d="M8.5 15.5L16.5 7.5" stroke="#fff" stroke-width="3"/></svg>
</div>
<div class="abs tbb" style="left:606px">
 <svg width="25" height="23" viewBox="0 0 25 23"><path d="M8 14L14 8Q15 7.3 16 8L17 9Q17.6 10 17 10.8L12.5 15H9Q8 15 8 14Z" fill="#fff"/><path d="M10.5 13.5L14.5 12" stroke="#1f2736" stroke-width="0.9"/></svg>
</div>

<!-- version -->
<div class="abs" style="left:998px;top:559px;font-size:8px;color:#555">v5.7.6</div>
<!-- chat -->
<div class="abs" style="left:968px;top:511px;width:40px;height:40px;border-radius:50%;background:#2f96dd;box-shadow:0 1px 6px rgba(0,0,0,0.18)"></div>
<svg class="abs" style="left:978.5px;top:520px" width="20" height="22" viewBox="0 0 20 22"><path d="M3.5 0.5H16.5Q19.5 0.5 19.5 3.5V21.5L15.5 18.5H3.5Q0.5 18.5 0.5 15.5V3.5Q0.5 0.5 3.5 0.5Z" fill="#fff"/><path d="M4.5 12Q10 15.5 15.5 12" stroke="#2f96dd" stroke-width="1.3" fill="none"/></svg>
<div class="abs" style="left:981px;top:35px;width:41px;height:113px;background:#1f2736;border:1px solid #000;border-right:none;border-radius:3px 0 0 3px">
  <div class="rb" style="top:3.5px;height:16px"><svg class="abs" style="left:10px;top:4px" width="11" height="8"><path d="M0.8 4Q5.5 -1 10.2 4Q5.5 9 0.8 4Z" fill="none" stroke="#222" stroke-width="1.2"/><circle cx="5.5" cy="4" r="1.8" fill="#222"/></svg></div>
  <div class="rb" style="top:23.5px;height:16px;font-size:7.5px;color:#222;text-align:center;line-height:16px">Views</div>
  <div class="rb" style="top:42.5px;height:16px"><svg class="abs" style="left:10px;top:3px" width="11" height="10"><path d="M0.5 2.5H3L4 1H7L8 2.5H10.5V9.5H0.5Z" fill="#222"/><circle cx="5.5" cy="5.8" r="2" fill="#efefef"/></svg></div>
  <div class="rb" style="top:62.5px;height:15px;background:#2e9bd8"><svg class="abs" style="left:10.5px;top:2px" width="10" height="11"><path d="M5 0.7L9.3 3V8L5 10.3L0.7 8V3Z" fill="#fff"/><path d="M0.7 3L5 5.3L9.3 3M5 5.3V10.3" stroke="#2e9bd8" stroke-width="0.9" fill="none"/></svg></div>
  <div class="rb" style="top:81.5px;height:21px;background:#21b33f"><svg class="abs" style="left:10px;top:5px" width="11" height="11"><circle cx="5.5" cy="5.5" r="5" fill="#fff"/><path d="M3.8 4.2A1.7 1.7 0 1 1 6.2 5.6Q5.5 6 5.5 6.8" stroke="#21b33f" stroke-width="1.2" fill="none"/><circle cx="5.5" cy="8.4" r="0.7" fill="#21b33f"/></svg></div>
</div>
<svg class="abs" style="left:22px;top:432px" width="100" height="65" viewBox="200 530 100 65">
  <polygon points="223.9,540.8 248.4,538.5 273.2,541.3 272.3,571.3 248.4,583.5 225.4,573.7" fill="#c4c4c5" fill-opacity="0.8"/>
  <polygon points="248.4,544.1 273.2,541.3 272.3,571.3 248.4,583.5" fill="#bdbdbe" fill-opacity="0.6"/>
  <g stroke="#3c3c3c" stroke-width="1.1" fill="none" stroke-dasharray="7 1.6">
    <path d="M223.9,540.8 L248.4,538.5 L273.2,541.3 L248.4,544.1 Z"/>
    <path d="M223.9,540.8 L225.4,573.7 M248.4,544.1 L248.4,583.5 M273.2,541.3 L272.3,571.3"/>
    <path d="M225.4,573.7 L248.4,583.5 L272.3,571.3"/>
  </g>
  <g stroke="#777" stroke-width="0.7" fill="none" stroke-dasharray="2 1.5" opacity="0.6">
    <path d="M248.4,538.5 L248.4,566 M225.4,573.7 L248.4,566 L272.3,571.3"/>
  </g>
  <polygon points="221.6,582.1 238.5,582.6 225.4,576.5" fill="#1a8cff"/>
  <path d="M204.5,586.8 L217.8,583.5" stroke="#1a8cff" stroke-width="1.6" stroke-dasharray="3 1"/>
  <polygon points="257.3,583 275.1,582.6 272.3,577" fill="#ff1a1a"/>
  <path d="M277,584.5 L291,588.7 M284,589 L287,584" stroke="#ff2020" stroke-width="1.1"/>
  <polygon points="227.2,570.5 241.3,567.6 230,567.6" fill="#d94040" opacity="0.8"/>
  <polygon points="257.3,567.6 270.4,571.3 269.5,567.6" fill="#3a90e0" opacity="0.8"/>
  <path d="M271,566.5 L278,565" stroke="#5aa8f0" stroke-width="0.9"/>
</svg>

</div>
<div id="status">
  <div class="abs" style="left:177px;top:0;width:1023px;height:1px;background:#000"></div>
  <div class="abs" style="left:1083px;top:1px;width:40px;height:16px;background:#1f2d47;color:#e8eaee;font-weight:bold;font-size:8.5px;text-align:center;line-height:18px">Metric</div>
  <div class="abs" style="left:1126px;top:1px;width:71px;height:16px;background:#1f2d47;color:#e8eaee;font-weight:bold;font-size:8.5px;text-align:center;line-height:18px;border-radius:0 0 3px 0">racking-system</div>
  <div class="abs" style="left:0;top:17px;width:1200px;height:1px;background:#3a4250"></div>
  <div class="abs" style="left:185px;top:18px;width:1015px;height:2px;background:#555"></div>
</div>
</body></html>
